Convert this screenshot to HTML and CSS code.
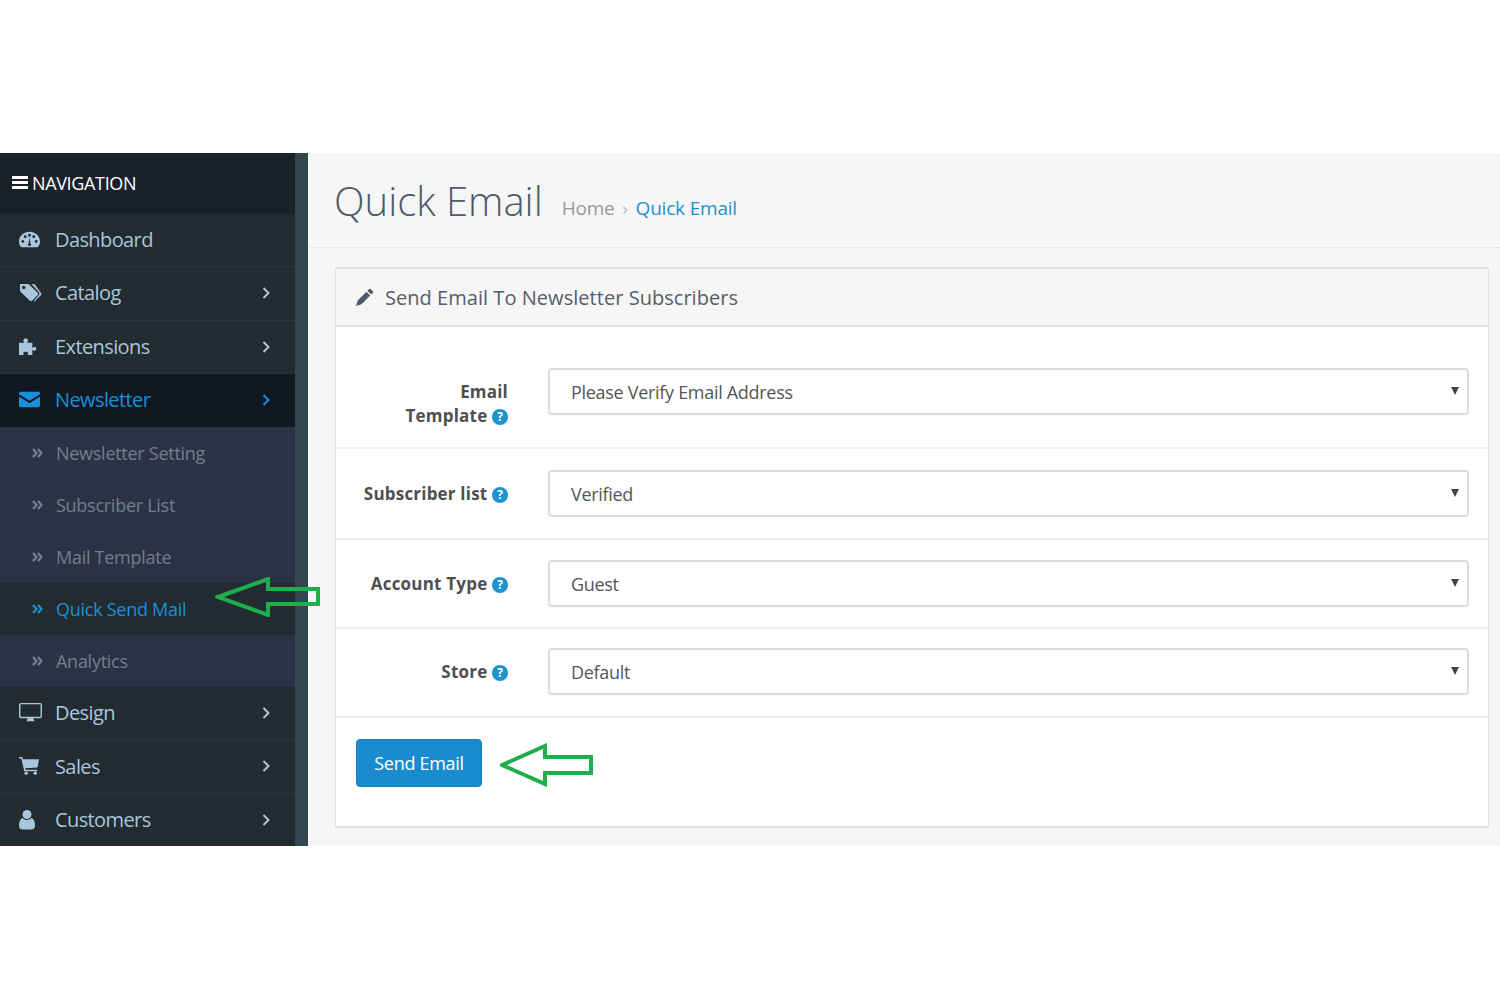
FILE: index.html
```html
<!DOCTYPE html>
<html lang="en">

<head>
    <meta charset="utf-8">
    <meta name="viewport" content="width=device-width, initial-scale=1.0">
    <title>Quick Email</title>
    <link rel="stylesheet" href="styles.css">
</head>

<body>
    <div class="app">

        <!--Sidebar-->
        <aside class="sidebar">
            <div class="nav-head">
                <svg class="burger" viewBox="0 0 16 14"><path d="M0 0h16v3H0zM0 5h16v3H0zM0 10h16v3H0z" /></svg>
                <span>NAVIGATION</span>
            </div>
            <ul class="menu">
                <li class="menu-item">
                    <svg class="icon" viewBox="0 0 22 18"><path fill-rule="evenodd" d="M11 1C5 1 0 5.500 0 11c0 2 .6 3.800 1.700 5.300.3.400.8.700 1.300.7h16c.5 0 1-.3 1.300-.7C21.400 14.800 22 13 22 11 22 5.500 17 1 11 1zM4 12.500a1.500 1.500 0 1 1 0-3 1.500 1.500 0 0 1 0 3zM6.500 7.500a1.500 1.500 0 1 1 0-3 1.500 1.500 0 0 1 0 3zM11 6a1.500 1.500 0 1 1 0-3 1.500 1.500 0 0 1 0 3zM18 12.500a1.500 1.500 0 1 1 0-3 1.500 1.500 0 0 1 0 3zM15.500 7.500a1.500 1.500 0 1 1 0-3 1.500 1.500 0 0 1 0 3zM12.500 15.500h-3a2 2 0 0 1 .6-2.400L11 7l1 6.100c.6.500.8 1.500.5 2.400z" /></svg>
                    <span>Dashboard</span>
                </li>
                <li class="menu-item">
                    <svg class="icon wide" viewBox="0 0 24 20"><path fill-rule="evenodd" d="M1 1h8c.6 0 1.200.3 1.600.7l9 8.800c.6.600.6 1.600 0 2.200l-6 6c-.6.600-1.600.6-2.200 0l-9.700-9.200C1.300 9.100 1 8.500 1 8zM5 6.500a1.800 1.800 0 1 0 0-3.600 1.800 1.800 0 0 0 0 3.600z" /><path d="M13 1h2c.6 0 1.200.3 1.600.7l6.400 8.800c.6.600.6 1.600 0 2.200l-6 6c-.5.500-1.100.5-1.700.2l5.500-6.200c.8-.9.800-2.100 0-3z" /></svg>
                    <span>Catalog</span>
                    <svg class="chevron" viewBox="0 0 8 12"><path d="M1.500 1l5 5-5 5" /></svg>
                </li>
                <li class="menu-item">
                    <svg class="icon" viewBox="0 0 22 20"><path d="M0 6h5.500C4.500 4.500 4.300 3.400 5 2.300c.9-1.300 3.100-1.300 4 0 .7 1.100.5 2.200-.5 3.700H14v5.500c1.500-1 2.700-1.200 3.800-.5v3c-1.100.7-2.300.5-3.800-.5V19H8.800c.9-1.500.9-2.700-.3-3.500H5.500C4.300 16.300 4.300 17.500 5.200 19H0z" /></svg>
                    <span>Extensions</span>
                    <svg class="chevron" viewBox="0 0 8 12"><path d="M1.500 1l5 5-5 5" /></svg>
                </li>
                <li class="menu-item open">
                    <svg class="icon" viewBox="0 0 22 16"><path d="M0 1.500C0 .7.700 0 1.500 0h19c.8 0 1.500.7 1.500 1.500v.9L11 9.300 0 2.400zM0 4.800l11 7 11-7v9.700c0 .8-.7 1.500-1.500 1.500h-19C.7 16 0 15.300 0 14.500z" /></svg>
                    <span>Newsletter</span>
                    <svg class="chevron" viewBox="0 0 8 12"><path d="M1.500 1l5 5-5 5" /></svg>
                </li>
                <li class="sub-item">
                    <svg class="dbl" viewBox="0 0 11 10"><path d="M1 1l3.500 4L1 9M6 1l3.500 4L6 9" /></svg>
                    <span>Newsletter Setting</span>
                </li>
                <li class="sub-item">
                    <svg class="dbl" viewBox="0 0 11 10"><path d="M1 1l3.500 4L1 9M6 1l3.500 4L6 9" /></svg>
                    <span>Subscriber List</span>
                </li>
                <li class="sub-item">
                    <svg class="dbl" viewBox="0 0 11 10"><path d="M1 1l3.500 4L1 9M6 1l3.500 4L6 9" /></svg>
                    <span>Mail Template</span>
                </li>
                <li class="sub-item current">
                    <svg class="dbl" viewBox="0 0 11 10"><path d="M1 1l3.500 4L1 9M6 1l3.500 4L6 9" /></svg>
                    <span>Quick Send Mail</span>
                </li>
                <li class="sub-item">
                    <svg class="dbl" viewBox="0 0 11 10"><path d="M1 1l3.500 4L1 9M6 1l3.500 4L6 9" /></svg>
                    <span>Analytics</span>
                </li>
                <li class="menu-item">
                    <svg class="icon wide" viewBox="0 0 24 20"><path fill-rule="evenodd" d="M2 0h20c1.100 0 2 .9 2 2v12c0 1.100-.9 2-2 2h-7c0 1 .3 1.600 1 2.300v.7H8v-.7c.7-.7 1-1.300 1-2.300H2c-1.100 0-2-.9-2-2V2C0 .9.900 0 2 0zm0 1.500c-.3 0-.5.200-.5.500v12c0 .3.200.5.500.5h20c.3 0 .5-.2.500-.5V2c0-.3-.2-.5-.5-.5z" /></svg>
                    <span>Design</span>
                    <svg class="chevron" viewBox="0 0 8 12"><path d="M1.500 1l5 5-5 5" /></svg>
                </li>
                <li class="menu-item">
                    <svg class="icon" viewBox="0 0 22 20"><path d="M0 1h3.500l.8 2.500H21l-1.500 8.500L6.500 13l.4 1.500H19V16H5.500L2.500 2.700H0z" /><circle cx="7.500" cy="18" r="1.800" /><circle cx="17" cy="18" r="1.800" /></svg>
                    <span>Sales</span>
                    <svg class="chevron" viewBox="0 0 8 12"><path d="M1.500 1l5 5-5 5" /></svg>
                </li>
                <li class="menu-item">
                    <svg class="icon user" viewBox="0 0 16 20"><circle cx="8" cy="5" r="4.500" /><path d="M3.500 8.500C4.800 9.800 6.300 10.500 8 10.500s3.200-.7 4.500-2C14.800 9.500 16 12 16 16c0 2.500-1.500 4-3.500 4h-9C1.500 20 0 18.500 0 16c0-4 1.200-6.500 3.500-7.500z" /></svg>
                    <span>Customers</span>
                    <svg class="chevron" viewBox="0 0 8 12"><path d="M1.500 1l5 5-5 5" /></svg>
                </li>
            </ul>
        </aside>
        <div class="strip"></div>

        <!--Indhold-->
        <main class="content">
            <div class="page-head">
                <h1>Quick Email</h1>
                <div class="crumbs">
                    <span>Home</span>
                    <span class="sep">›</span>
                    <a href="#">Quick Email</a>
                </div>
            </div>

            <section class="panel">
                <div class="panel-head">
                    <svg class="pencil" viewBox="0 0 18 18"><path d="M13 1.200c.5-.5 1.200-.5 1.700 0l2.100 2.100c.5.500.5 1.200 0 1.700l-1.600 1.600-3.800-3.800zM10.400 3.800l3.800 3.800-8.700 8.700L0 18l1.700-5.500z" /></svg>
                    <h2>Send Email To Newsletter Subscribers</h2>
                </div>
                <form class="panel-body">
                    <div class="form-row first">
                        <label>Email<br>Template <i class="help">?</i></label>
                        <div class="select-wrap">
                            <select><option>Please Verify Email Address</option></select>
                        </div>
                    </div>
                    <div class="form-row second">
                        <label>Subscriber list <i class="help">?</i></label>
                        <div class="select-wrap">
                            <select><option>Verified</option></select>
                        </div>
                    </div>
                    <div class="form-row">
                        <label>Account Type <i class="help">?</i></label>
                        <div class="select-wrap">
                            <select><option>Guest</option></select>
                        </div>
                    </div>
                    <div class="form-row last">
                        <label>Store <i class="help">?</i></label>
                        <div class="select-wrap">
                            <select><option>Default</option></select>
                        </div>
                    </div>
                    <div class="form-actions">
                        <button type="button" class="send">Send Email</button>
                        <svg class="arrow" viewBox="0 0 94 44"><path d="M2 22L45 3v11h46v16H45v11z" /></svg>
                    </div>
                </form>
            </section>
        </main>

        <!--Pil over menuen-->
        <svg class="arrow menu-arrow" viewBox="0 0 106 40"><path d="M3 20L53 2v10h50v15H53v11z" /></svg>
    </div>
</body>

</html>
```

FILE: styles.css
```css
body {
    margin: 0;
    background-color: #fff;
    font-family: "Open Sans", sans-serif;
    height: 1000px;
    overflow: hidden;
}

.app {
    position: relative;
    display: flex;
    margin-top: 153px;
    height: 693px;
    overflow: visible;
}

/* SIDEBAR */

.sidebar {
    width: 295px;
    flex-shrink: 0;
    background-color: #222b30;
    overflow: hidden;
}

.strip {
    width: 13px;
    flex-shrink: 0;
    background-color: #33454e;
}

.nav-head {
    height: 59px;
    padding-bottom: 2px;
    display: flex;
    align-items: center;
    padding-left: 12px;
    background-color: #19222b;
    color: #fff;
    font-size: 18px;
    letter-spacing: -.35px;
}

.burger {
    width: 16px;
    height: 14px;
    margin-right: 4px;
    fill: #fff;
}

.menu {
    list-style: none;
    margin: 0;
    padding: 0;
}

.menu-item {
    position: relative;
    height: 51.300px;
    padding-bottom: 1px;
    display: flex;
    align-items: center;
    padding-left: 55px;
    border-bottom: 1px solid #2a343c;
    color: #a9c6dc;
    font-size: 20px;
    letter-spacing: -.6px;
}

.menu-item .icon {
    position: absolute;
    left: 19px;
    top: 15px;
    width: 21px;
    height: 21px;
    fill: #a9c6dc;
}

.menu-item .wide {
    width: 23px;
}

.menu-item .user {
    width: 16px;
}

.chevron {
    position: absolute;
    left: 262px;
    top: 20px;
    width: 8px;
    height: 12px;
    fill: none;
    stroke: #a9c6dc;
    stroke-width: 2;
}

.menu-item.open {
    background-color: #111821;
    border-bottom-color: #111821;
    color: #1a8fd8;
}

.menu-item.open .icon {
    fill: #1a8fd8;
}

.menu-item.open .chevron {
    stroke: #1a8fd8;
}

.sub-item {
    height: 52px;
    display: flex;
    align-items: center;
    padding-left: 32px;
    background-color: #2c3245;
    color: #6f7f8e;
    font-size: 18px;
    letter-spacing: -.27px;
}

.sub-item .dbl {
    width: 11px;
    height: 10px;
    margin-right: 13px;
    fill: none;
    stroke: #6f8193;
    stroke-width: 2.200;
}

.sub-item.current {
    background-color: #222b30;
    color: #1a8fd8;
}

.sub-item.current .dbl {
    stroke: #1a8fd8;
}

/* INDHOLD */

.content {
    flex: 1;
    background-color: #f6f6f6;
    padding-right: 11px;
    min-width: 0;
}

.page-head {
    height: 94px;
    margin-right: -11px;
    padding-left: 26px;
    display: flex;
    align-items: flex-start;
    border-bottom: 1px solid #e9e9e9;
}

h1 {
    margin: 0;
    padding-top: 20px;
    font-size: 40px;
    font-weight: 300;
    color: #4f5a68;
    line-height: 56px;
}

.crumbs {
    margin-left: 19px;
    padding-top: 42px;
    font-size: 19px;
    line-height: 26px;
    letter-spacing: -.2px;
    color: #999;
}

.crumbs .sep {
    margin: 0 3px;
    color: #bbb;
}

.crumbs a {
    color: #1e91cf;
    text-decoration: none;
}

.panel {
    margin: 19px 0 0 27px;
    border-top: 2px solid #e4e4e4;
    border-left: 1px solid #e4e4e4;
    border-right: 1px solid #e4e4e4;
    border-bottom: 2px solid #e0e0e0;
}

.panel-head {
    height: 56px;
    display: flex;
    align-items: center;
    padding-left: 20px;
    border-bottom: 2px solid #e4e4e4;
}

.pencil {
    width: 18px;
    height: 18px;
    margin-right: 11px;
    fill: #4f5a68;
}

h2 {
    margin: 0;
    font-size: 20px;
    font-weight: 400;
    color: #555e6c;
    letter-spacing: .04px;
}

.panel-body {
    display: block;
    background-color: #fff;
}

.form-row {
    display: flex;
    align-items: flex-start;
    height: 67px;
    padding: 20px 20px 0 0;
    border-bottom: 2px solid #f0f0f0;
}

.form-row.first {
    height: 79px;
    padding-top: 41px;
}

.form-row.second {
    height: 68px;
    padding-top: 21px;
}

.form-row.last {
    height: 68px;
    padding-top: 19px;
}

label {
    width: 172px;
    flex-shrink: 0;
    margin: 12px 40px 0 0;
    text-align: right;
    font-size: 17px;
    font-weight: 700;
    line-height: 24px;
    letter-spacing: .2px;
    color: #4f4f4f;
}

.help {
    display: inline-block;
    width: 16px;
    height: 16px;
    border-radius: 50%;
    background-color: #1e91cf;
    color: #fff;
    font-size: 12px;
    font-style: normal;
    line-height: 16px;
    letter-spacing: 0;
    text-align: center;
    vertical-align: 1px;
}

.select-wrap {
    position: relative;
    flex: 1;
    margin-right: -1px;
}

.select-wrap::after {
    content: "";
    position: absolute;
    right: 10px;
    top: 19px;
    border-left: 4px solid transparent;
    border-right: 4px solid transparent;
    border-top: 8px solid #444;
}

select {
    display: block;
    width: 100%;
    height: 47px;
    padding: 0 21px;
    appearance: none;
    background-color: #fff;
    border: 2px solid #dcdcdc;
    border-radius: 4px;
    font-family: "Open Sans", sans-serif;
    font-size: 18px;
    letter-spacing: -.3px;
    color: #555;
}

.form-actions {
    height: 108px;
    display: flex;
    align-items: flex-start;
    padding: 21px 0 0 20px;
    box-sizing: border-box;
}

.send {
    width: 126px;
    height: 48px;
    background-color: #1a8ccd;
    border: 1px solid #1a7fb8;
    border-radius: 4px;
    color: #fff;
    font-family: "Open Sans", sans-serif;
    font-size: 18px;
    letter-spacing: -.3px;
}

.arrow {
    fill: none;
    stroke: #1fae4b;
    stroke-width: 4;
}

.form-actions .arrow {
    width: 94px;
    height: 44px;
    margin: 4px 0 0 18px;
}

.menu-arrow {
    position: absolute;
    left: 215px;
    top: 424px;
    width: 106px;
    height: 40px;
}
```
